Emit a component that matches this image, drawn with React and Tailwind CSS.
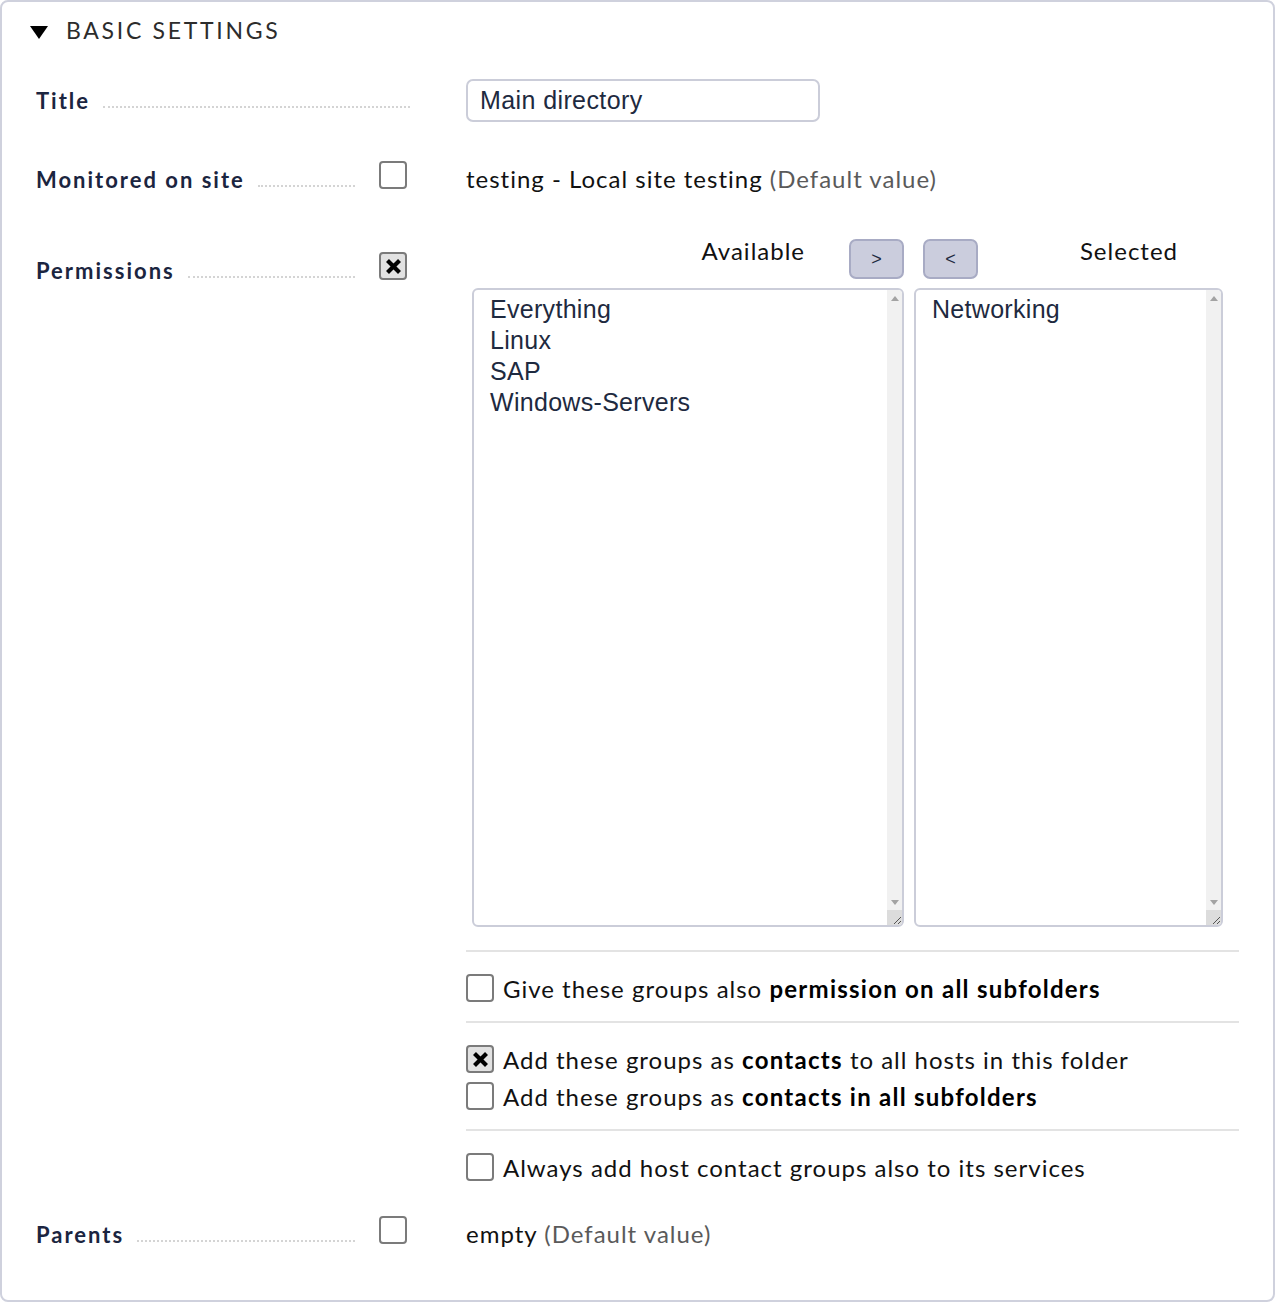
import React from 'react';

const lato = { fontFamily: '"Lato", "Liberation Sans", sans-serif' };
const arial = { fontFamily: '"Liberation Sans", Arial, sans-serif' };

const Check = ({ checked }) => (
    <span
        className={`flex h-[28px] w-[28px] shrink-0 items-center justify-center rounded-[4px] border-2 border-[#7b7b7b] ${checked ? 'bg-[#e2e2e2]' : 'bg-white'}`}
    >
        {checked && (
            <svg width="17" height="17" viewBox="0 0 17 17">
                <path d="M2.5 2.5 L14.5 14.5 M14.5 2.5 L2.5 14.5" stroke="#000" strokeWidth="4.2" />
            </svg>
        )}
    </span>
);

const Label = ({ text, withCheck, checked }) => (
    <div className="flex h-full w-[374px] shrink-0 items-center">
        <span
            className={`whitespace-nowrap text-[22px] leading-none font-bold tracking-[2px] text-[#1b2540] ${withCheck ? 'mt-[9px]' : ''}`}
        >
            {text}
        </span>
        <span
            className={`ml-[13px] flex-1 border-b-2 border-dotted border-[#d4d4d4] ${withCheck ? 'mr-[24px] mt-[22px]' : 'mt-[12px]'}`}
        />
        {withCheck && <Check checked={checked} />}
        {withCheck && <span className="w-[3px]" />}
    </div>
);

const Scrollbar = () => (
    <div className="flex w-[15px] flex-col bg-[#f1f1f1]">
        <div className="flex h-[16px] items-center justify-center">
            <svg width="8" height="5" viewBox="0 0 8 5"><polygon points="4,0 8,5 0,5" fill="#a3a3a3" /></svg>
        </div>
        <div className="flex-1" />
        <div className="flex h-[16px] items-center justify-center">
            <svg width="8" height="5" viewBox="0 0 8 5"><polygon points="0,0 8,0 4,5" fill="#a3a3a3" /></svg>
        </div>
        <div className="flex h-[15px] items-end justify-end bg-[#dcdcdc]">
            <svg width="12" height="12" viewBox="0 0 12 12">
                <path d="M11 4 L4 11 M11 8 L8 11" stroke="#555" strokeWidth="1" />
            </svg>
        </div>
    </div>
);

const ListBox = ({ items, width }) => (
    <div className={`flex h-[639px] ${width} overflow-hidden rounded-[6px] border-2 border-[#cbcdd9] bg-white`}>
        <div className="flex-1 pl-[16px] pt-[4px] text-[25px] leading-[31px] tracking-[0.3px] text-[#1e2a40]" style={arial}>
            {items.map((it) => (
                <div key={it}>{it}</div>
            ))}
        </div>
        <Scrollbar />
    </div>
);

const MoveButton = ({ children }) => (
    <button
        type="button"
        className="flex h-[40px] w-[55px] items-center justify-center rounded-[7px] border-2 border-[#a8abc4] bg-[#cbcddd] text-[18px] text-[#1e2a40]"
        style={arial}
    >
        {children}
    </button>
);

const Text = ({ children, className = '' }) => (
    <span className={`whitespace-nowrap text-[24px] leading-none tracking-[1px] text-[#111] ${className}`}>{children}</span>
);

const Bold = ({ children }) => <b className="font-bold tracking-[1.25px] text-black">{children}</b>;

const OptRow = ({ checked, children }) => (
    <div className="flex h-[28px] items-center gap-[9px]">
        <Check checked={checked} />
        <Text className="mt-[2px]">{children}</Text>
    </div>
);

const Hr = () => <div className="h-[2px] w-[773px] bg-[#e3e3e3]" />;

export default function App() {
    return (
        <div className="h-[1302px] w-[1275px] bg-white" style={lato}>
            <div className="h-full w-full rounded-[8px] border-2 border-[#cfd1dd] pl-[34px]">
                {/* header */}
                <div className="flex h-[32px] items-center mt-[12px]">
                    <svg width="18" height="14" viewBox="0 0 18 14" className="mt-[6px] ml-[-6px]">
                        <polygon points="0,0 18,0 9,13" fill="#000" />
                    </svg>
                    <span className="ml-[18px] text-[23px] leading-none tracking-[2.7px] text-[#2c2c2c]">BASIC SETTINGS</span>
                </div>

                {/* Title */}
                <div className="mt-[33px] flex h-[43px] items-center">
                    <Label text="Title" />
                    <div className="ml-[56px] flex h-[43px] w-[354px] items-center rounded-[7px] border-2 border-[#cbcdd9] px-[12px]">
                        <span className="text-[25px] leading-none tracking-[0.4px] text-[#1e2a40]" style={arial}>
                            Main directory
                        </span>
                    </div>
                </div>

                {/* Monitored on site */}
                <div className="mt-[39px] flex h-[28px] items-center">
                    <Label text="Monitored on site" withCheck />
                    <Text className="ml-[56px] mt-[8px]">
                        testing - Local site testing <span className="text-[#5a5a5a]">(Default value)</span>
                    </Text>
                </div>

                {/* Permissions */}
                <div className="mt-[50px] flex items-start">
                    <div className="mt-[13px] h-[28px]">
                        <Label text="Permissions" withCheck checked />
                    </div>
                    <div className="ml-[56px] flex flex-col">
                        <div className="flex h-[40px] pl-[6px]">
                            <div className="flex w-[432px] items-start justify-end">
                                <Text className="mr-[44px]">Available</Text>
                                <MoveButton>&gt;</MoveButton>
                            </div>
                            <div className="ml-[10px] flex w-[309px] items-start">
                                <span className="ml-[9px]"><MoveButton>&lt;</MoveButton></span>
                                <Text className="ml-auto mr-[45px]">Selected</Text>
                            </div>
                        </div>
                        <div className="mt-[9px] flex gap-[10px] pl-[6px]">
                            <ListBox items={['Everything', 'Linux', 'SAP', 'Windows-Servers']} width="w-[432px]" />
                            <ListBox items={['Networking']} width="w-[309px]" />
                        </div>
                        <div className="mt-[23px]"><Hr /></div>
                        <div className="mt-[22px]">
                            <OptRow>
                                Give these groups also <Bold>permission on all subfolders</Bold>
                            </OptRow>
                        </div>
                        <div className="mt-[19px]"><Hr /></div>
                        <div className="mt-[22px] flex flex-col gap-[9px]">
                            <OptRow checked>
                                Add these groups as <Bold>contacts</Bold> to all hosts in this folder
                            </OptRow>
                            <OptRow>
                                Add these groups as <Bold>contacts in all subfolders</Bold>
                            </OptRow>
                        </div>
                        <div className="mt-[19px]"><Hr /></div>
                        <div className="mt-[22px]">
                            <OptRow>Always add host contact groups also to its services</OptRow>
                        </div>
                    </div>
                </div>

                {/* Parents */}
                <div className="mt-[35px] flex h-[28px] items-center">
                    <Label text="Parents" withCheck />
                    <Text className="ml-[56px] mt-[8px]">
                        empty <span className="text-[#5a5a5a]">(Default value)</span>
                    </Text>
                </div>
            </div>
        </div>
    );
}
